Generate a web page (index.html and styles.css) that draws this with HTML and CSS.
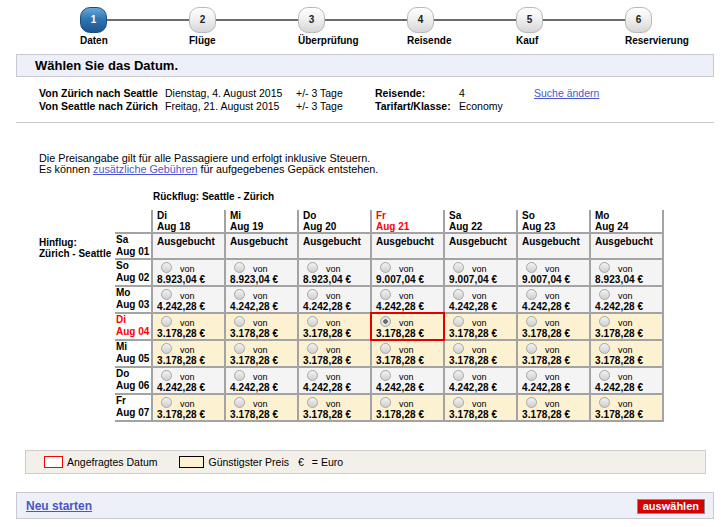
FILE: index.html
```html
<!DOCTYPE html>
<html lang="de">
<head>
  <meta charset="UTF-8">
  <title>Wählen Sie das Datum</title>
  <link rel="stylesheet" href="styles.css">
</head>
<body>

<div class="steps">
  <div class="step active">
    <div class="step-top"><span class="num">1</span><span class="bar"></span></div>
    <div class="step-label">Daten</div>
  </div>
  <div class="step">
    <div class="step-top"><span class="num">2</span><span class="bar"></span></div>
    <div class="step-label">Flüge</div>
  </div>
  <div class="step">
    <div class="step-top"><span class="num">3</span><span class="bar"></span></div>
    <div class="step-label">Überprüfung</div>
  </div>
  <div class="step">
    <div class="step-top"><span class="num">4</span><span class="bar"></span></div>
    <div class="step-label">Reisende</div>
  </div>
  <div class="step">
    <div class="step-top"><span class="num">5</span><span class="bar"></span></div>
    <div class="step-label">Kauf</div>
  </div>
  <div class="step last">
    <div class="step-top"><span class="num">6</span></div>
    <div class="step-label">Reservierung</div>
  </div>
</div>

<div class="title-box">Wählen Sie das Datum.</div>

<table class="info">
  <tr>
    <th>Von Zürich nach Seattle</th>
    <td>Dienstag, 4. August 2015</td>
    <td>+/- 3 Tage</td>
    <th>Reisende:</th>
    <td>4</td>
    <td><a href="#">Suche ändern</a></td>
  </tr>
  <tr>
    <th>Von Seattle nach Zürich</th>
    <td>Freitag, 21. August 2015</td>
    <td>+/- 3 Tage</td>
    <th>Tarifart/Klasse:</th>
    <td>Economy</td>
    <td></td>
  </tr>
</table>

<div class="divider"></div>

<p class="notice">
  Die Preisangabe gilt für alle Passagiere und erfolgt inklusive Steuern.<br>
  Es können <a href="#">zusätzliche Gebühren</a> für aufgegebenes Gepäck entstehen.
</p>

<table class="grid">
  <colgroup>
    <col class="c-hin"><col class="c-rowhead">
    <col class="c-day"><col class="c-day"><col class="c-day"><col class="c-day"><col class="c-day"><col class="c-day"><col class="c-day">
  </colgroup>
  <tr class="caption-row">
    <td></td><td></td>
    <td colspan="7" class="caption">Rückflug: Seattle - Zürich</td>
  </tr>
  <tr class="head-row">
    <td></td><td></td>
    <th>Di<br>Aug 18</th>
    <th>Mi<br>Aug 19</th>
    <th>Do<br>Aug 20</th>
    <th class="req">Fr<br>Aug 21</th>
    <th>Sa<br>Aug 22</th>
    <th>So<br>Aug 23</th>
    <th>Mo<br>Aug 24</th>
  </tr>
  <tr class="full first">
    <td class="hin">Hinflug:<br>Zürich - Seattle</td>
    <th class="rowhead">Sa<br>Aug 01</th>
    <td class="cell">Ausgebucht</td>
    <td class="cell">Ausgebucht</td>
    <td class="cell">Ausgebucht</td>
    <td class="cell">Ausgebucht</td>
    <td class="cell">Ausgebucht</td>
    <td class="cell">Ausgebucht</td>
    <td class="cell">Ausgebucht</td>
  </tr>
  <tr class="full">
    <td></td>
    <th class="rowhead">So<br>Aug 02</th>
    <td class="cell"><div class="opt"><span class="radio"></span>von</div><div class="price">8.923,04 €</div></td>
    <td class="cell"><div class="opt"><span class="radio"></span>von</div><div class="price">8.923,04 €</div></td>
    <td class="cell"><div class="opt"><span class="radio"></span>von</div><div class="price">8.923,04 €</div></td>
    <td class="cell"><div class="opt"><span class="radio"></span>von</div><div class="price">9.007,04 €</div></td>
    <td class="cell"><div class="opt"><span class="radio"></span>von</div><div class="price">9.007,04 €</div></td>
    <td class="cell"><div class="opt"><span class="radio"></span>von</div><div class="price">9.007,04 €</div></td>
    <td class="cell"><div class="opt"><span class="radio"></span>von</div><div class="price">8.923,04 €</div></td>
  </tr>
  <tr class="full">
    <td></td>
    <th class="rowhead">Mo<br>Aug 03</th>
    <td class="cell"><div class="opt"><span class="radio"></span>von</div><div class="price">4.242,28 €</div></td>
    <td class="cell"><div class="opt"><span class="radio"></span>von</div><div class="price">4.242,28 €</div></td>
    <td class="cell"><div class="opt"><span class="radio"></span>von</div><div class="price">4.242,28 €</div></td>
    <td class="cell"><div class="opt"><span class="radio"></span>von</div><div class="price">4.242,28 €</div></td>
    <td class="cell"><div class="opt"><span class="radio"></span>von</div><div class="price">4.242,28 €</div></td>
    <td class="cell"><div class="opt"><span class="radio"></span>von</div><div class="price">4.242,28 €</div></td>
    <td class="cell"><div class="opt"><span class="radio"></span>von</div><div class="price">4.242,28 €</div></td>
  </tr>
  <tr class="cheap">
    <td></td>
    <th class="rowhead req">Di<br>Aug 04</th>
    <td class="cell"><div class="opt"><span class="radio"></span>von</div><div class="price">3.178,28 €</div></td>
    <td class="cell"><div class="opt"><span class="radio"></span>von</div><div class="price">3.178,28 €</div></td>
    <td class="cell"><div class="opt"><span class="radio"></span>von</div><div class="price">3.178,28 €</div></td>
    <td class="cell selected"><div class="opt"><span class="radio checked"></span>von</div><div class="price">3.178,28 €</div></td>
    <td class="cell"><div class="opt"><span class="radio"></span>von</div><div class="price">3.178,28 €</div></td>
    <td class="cell"><div class="opt"><span class="radio"></span>von</div><div class="price">3.178,28 €</div></td>
    <td class="cell"><div class="opt"><span class="radio"></span>von</div><div class="price">3.178,28 €</div></td>
  </tr>
  <tr class="cheap">
    <td></td>
    <th class="rowhead">Mi<br>Aug 05</th>
    <td class="cell"><div class="opt"><span class="radio"></span>von</div><div class="price">3.178,28 €</div></td>
    <td class="cell"><div class="opt"><span class="radio"></span>von</div><div class="price">3.178,28 €</div></td>
    <td class="cell"><div class="opt"><span class="radio"></span>von</div><div class="price">3.178,28 €</div></td>
    <td class="cell"><div class="opt"><span class="radio"></span>von</div><div class="price">3.178,28 €</div></td>
    <td class="cell"><div class="opt"><span class="radio"></span>von</div><div class="price">3.178,28 €</div></td>
    <td class="cell"><div class="opt"><span class="radio"></span>von</div><div class="price">3.178,28 €</div></td>
    <td class="cell"><div class="opt"><span class="radio"></span>von</div><div class="price">3.178,28 €</div></td>
  </tr>
  <tr class="full">
    <td></td>
    <th class="rowhead">Do<br>Aug 06</th>
    <td class="cell"><div class="opt"><span class="radio"></span>von</div><div class="price">4.242,28 €</div></td>
    <td class="cell"><div class="opt"><span class="radio"></span>von</div><div class="price">4.242,28 €</div></td>
    <td class="cell"><div class="opt"><span class="radio"></span>von</div><div class="price">4.242,28 €</div></td>
    <td class="cell"><div class="opt"><span class="radio"></span>von</div><div class="price">4.242,28 €</div></td>
    <td class="cell"><div class="opt"><span class="radio"></span>von</div><div class="price">4.242,28 €</div></td>
    <td class="cell"><div class="opt"><span class="radio"></span>von</div><div class="price">4.242,28 €</div></td>
    <td class="cell"><div class="opt"><span class="radio"></span>von</div><div class="price">4.242,28 €</div></td>
  </tr>
  <tr class="cheap">
    <td></td>
    <th class="rowhead">Fr<br>Aug 07</th>
    <td class="cell"><div class="opt"><span class="radio"></span>von</div><div class="price">3.178,28 €</div></td>
    <td class="cell"><div class="opt"><span class="radio"></span>von</div><div class="price">3.178,28 €</div></td>
    <td class="cell"><div class="opt"><span class="radio"></span>von</div><div class="price">3.178,28 €</div></td>
    <td class="cell"><div class="opt"><span class="radio"></span>von</div><div class="price">3.178,28 €</div></td>
    <td class="cell"><div class="opt"><span class="radio"></span>von</div><div class="price">3.178,28 €</div></td>
    <td class="cell"><div class="opt"><span class="radio"></span>von</div><div class="price">3.178,28 €</div></td>
    <td class="cell"><div class="opt"><span class="radio"></span>von</div><div class="price">3.178,28 €</div></td>
  </tr>
</table>

<div class="legend">
  <span class="swatch swatch-req"></span>
  <span>Angefragtes Datum</span>
  <span class="swatch swatch-cheap"></span>
  <span>Günstigster Preis</span>
  <span class="euro">€</span>
  <span>= Euro</span>
</div>

<div class="bottom-bar">
  <a href="#" class="restart">Neu starten</a>
  <button class="select-btn">auswählen</button>
</div>

</body>
</html>
```

FILE: styles.css
```css
body {
  margin: 0;
  font-family: "Liberation Sans", Arial, sans-serif;
  color: #000;
  background: #fff;
}

a {
  color: #4a56cf;
}

/* Schritte oben */
.steps {
  display: flex;
  padding: 7px 0 0 80px;
  height: 47px;
}
.step {
  width: 109px;
}
.step.last {
  width: auto;
}
.step-top {
  display: flex;
  align-items: center;
}
.num {
  width: 25px;
  height: 24px;
  border: 1px solid #b9b9b9;
  border-radius: 10px;
  background: linear-gradient(#ffffff, #f0f0f0 45%, #d6d6d6);
  font-size: 10px;
  font-weight: bold;
  line-height: 24px;
  text-align: center;
  color: #222;
  flex: none;
}
.step.active .num {
  border-color: #1d4f7e;
  background: linear-gradient(#6aa7d8, #2f77b3 45%, #1a568e);
  color: #fff;
}
.bar {
  flex: 1;
  height: 2px;
  background: #6b6b6b;
}
.step-label {
  margin-top: 2px;
  font-size: 10px;
  font-weight: bold;
  line-height: 12px;
}

/* Titel */
.title-box {
  margin: 0 10px 0 16px;
  height: 21px;
  border: 1px solid #c9c9cf;
  background: #eef0f9;
  padding-left: 18px;
  font-size: 13px;
  font-weight: bold;
  line-height: 21px;
}

/* Suchangaben */
.info {
  margin: 10px 0 0 39px;
  border-collapse: collapse;
  font-size: 10.5px;
  line-height: 13px;
}
.info th, .info td {
  padding: 0;
  text-align: left;
  white-space: nowrap;
}
.info th:nth-child(1) { width: 126px; }
.info td:nth-child(2) { width: 131px; }
.info td:nth-child(3) { width: 79px; }
.info th:nth-child(4) { width: 84px; }
.info td:nth-child(5) { width: 75px; }

.divider {
  margin: 9px 10px 0 16px;
  height: 1px;
  background: #cccccc;
}

.notice {
  margin: 30px 0 0 39px;
  font-size: 10.8px;
  line-height: 11px;
}

/* Kalender */
.grid {
  margin: 16px 0 0 39px;
  border-collapse: collapse;
  table-layout: fixed;
  width: 625px;
  font-size: 10px;
  font-weight: bold;
}
.c-hin { width: 76px; }
.c-rowhead { width: 37px; }
.c-day { width: 73px; }

.grid th, .grid td {
  padding: 0;
  text-align: left;
  vertical-align: top;
  font-weight: bold;
}
.grid .caption {
  padding: 0 0 7px 1px;
  line-height: 12px;
}
.head-row {
  height: 22px;
}
.grid .head-row th {
  border-left: 2px solid #a3a3a3;
  border-right: 2px solid #a3a3a3;
  padding: 0 4px;
  line-height: 11px;
}
.grid tr.full, .grid tr.cheap {
  height: 27px;
}
.grid tr.first {
  height: 25px;
}
.grid .hin {
  vertical-align: middle;
  line-height: 11px;
  padding-top: 3px;
  white-space: nowrap;
}
.grid .rowhead {
  border-top: 2px solid #a3a3a3;
  border-bottom: 2px solid #a3a3a3;
  padding: 0 0 0 1px;
  line-height: 12px;
  background: #fff;
}
.grid .req {
  color: #ff0000;
}
.grid .cell {
  border: 2px solid #a3a3a3;
  padding: 2px 4px 0 4px;
  line-height: 12px;
  white-space: nowrap;
}
.full .cell {
  background: #f4f4f4;
}
.cheap .cell {
  background: #fcf1d1;
}
.grid .cell.selected {
  outline: 2px solid #e00000;
  outline-offset: -1px;
}
.opt {
  font-size: 9px;
  font-weight: normal;
  line-height: 12px;
  height: 12px;
}
.radio {
  display: inline-block;
  width: 9px;
  height: 9px;
  border: 1px solid #a8a8a8;
  border-radius: 50%;
  background: linear-gradient(#f2f2f2, #cfcfcf);
  margin: 0 8px 0 4px;
  vertical-align: -1px;
}
.radio.checked {
  background: radial-gradient(circle, #6a6a6a 0 2px, #e9e9e9 2.5px, #cfcfcf);
}
.price {
  line-height: 11px;
  letter-spacing: 0.1px;
}

/* Legende */
.legend {
  margin: 28px 18px 0 25px;
  height: 22px;
  border: 1px solid #cccccc;
  background: #f3f0e9;
  display: flex;
  align-items: center;
  padding-left: 18px;
  font-size: 10.5px;
}
.swatch {
  height: 10px;
  border: 1px solid #000;
  margin-right: 4px;
}
.swatch-req {
  width: 17px;
  border-color: #ff0000;
  background: #fff;
}
.swatch-cheap {
  width: 23px;
  margin-left: 22px;
  background: #fcf1d1;
}
.euro {
  margin: 0 8px 0 9px;
}

/* Unten */
.bottom-bar {
  margin: 18px 10px 0 16px;
  height: 25px;
  border: 1px solid #c9c9cf;
  background: #eef0f9;
  display: flex;
  justify-content: space-between;
  align-items: center;
  padding: 0 8px 0 9px;
}
.restart {
  font-size: 12px;
  font-weight: bold;
  color: #4a56c8;
}
.select-btn {
  height: 15px;
  border: 1px solid #8d8d8d;
  background: #d40000;
  color: #fff;
  font-family: "Liberation Sans", Arial, sans-serif;
  font-size: 11px;
  font-weight: bold;
  line-height: 13px;
  padding: 0 5px;
  margin-top: 2px;
}
```
